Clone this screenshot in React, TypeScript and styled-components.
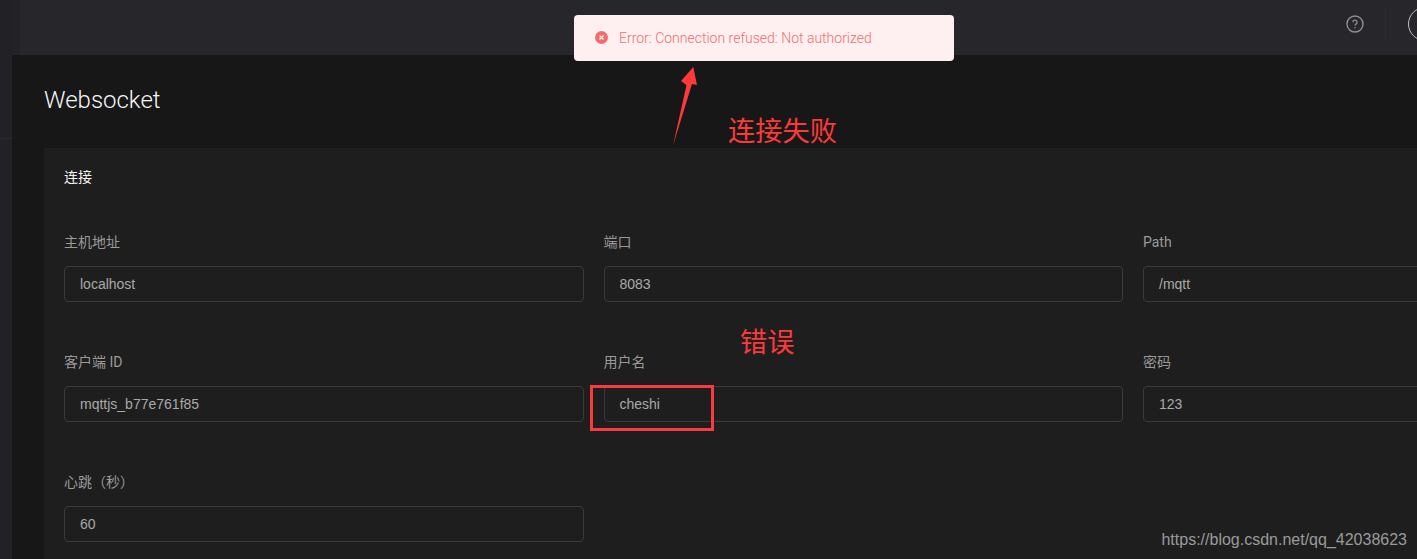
import React from 'react';
import styled, { createGlobalStyle } from 'styled-components';

const GlobalStyle = createGlobalStyle`
  html, body {
    margin: 0;
    padding: 0;
    width: 1417px;
    height: 559px;
    overflow: hidden;
    background: #171717;
  }
  * {
    box-sizing: border-box;
  }
`;

const fontStack = `Roboto, "Noto Sans CJK SC", sans-serif`;

const Page = styled.div`
  position: relative;
  display: flex;
  width: 1417px;
  height: 559px;
  overflow: hidden;
  font-family: ${fontStack};
`;

const Sidebar = styled.aside`
  flex: 0 0 12px;
  background: #222226;

  &::after {
    content: '';
    display: block;
    height: 1px;
    margin-top: 138px;
    background: #2a2a2e;
  }
`;

const Main = styled.div`
  flex: 1;
  min-width: 0;
  display: flex;
  flex-direction: column;
  background: #171717;
`;

const Header = styled.header`
  flex: 0 0 55px;
  display: flex;
  align-items: center;
  justify-content: flex-end;
  background: #26262b;
  border-left: 8px solid #232327;
  overflow: hidden;
`;

const HelpIcon = styled.svg`
  width: 18px;
  height: 18px;
  margin-right: 21px;
  margin-top: -7px;
  flex: none;
`;

const Divider = styled.div`
  width: 1px;
  height: 32px;
  margin-top: -7px;
  background: #2c2c31;
`;

const Avatar = styled.div`
  flex: none;
  width: 34px;
  height: 34px;
  margin-left: 22px;
  margin-top: -7px;
  margin-right: -25px;
  border: 1.5px solid #bdbdc0;
  border-radius: 50%;
`;

const Content = styled.main`
  flex: 1;
  padding: 0 0 0 32px;
  min-height: 0;
`;

const Title = styled.h1`
  margin: 0;
  padding-top: 30px;
  height: 93px;
  font-size: 24px;
  line-height: 30px;
  font-weight: 300;
  color: #f6f6f6;
`;

const Card = styled.section`
  width: 1500px;
  height: 420px;
  padding: 19px 20px 20px;
  background: #1f1e1f;
`;

const CardTitle = styled.h2`
  margin: 0;
  height: 55px;
  font-size: 14px;
  line-height: 20px;
  font-weight: 400;
  color: #f4f4f4;
`;

const FieldGrid = styled.div`
  display: grid;
  grid-template-columns: repeat(3, 519.5px);
  column-gap: 20px;
  row-gap: 40px;
`;

const Field = styled.div`
  display: flex;
  flex-direction: column;
`;

const Label = styled.label`
  height: 44px;
  padding-top: 10px;
  font-size: 14px;
  line-height: 20px;
  color: #9a9a9a;
`;

const Input = styled.div`
  height: 36px;
  padding: 0 15px;
  display: flex;
  align-items: center;
  border: 1px solid #3a3a3b;
  border-radius: 4px;
  font-family: "Liberation Sans", Arial, sans-serif;
  font-size: 14px;
  color: #a9a9a9;
`;

const Toast = styled.div`
  position: absolute;
  left: 574px;
  top: 15px;
  width: 380px;
  height: 46px;
  padding: 0 0 1px 21px;
  display: flex;
  align-items: center;
  gap: 11px;
  background: #fef0f0;
  border-radius: 4px;
  font-size: 14px;
  font-weight: 300;
  color: #f56c6c;
`;

const ToastIcon = styled.svg`
  width: 13px;
  height: 13px;
  flex: none;
`;

const Arrow = styled.svg`
  position: absolute;
  left: 670px;
  top: 66px;
  width: 30px;
  height: 82px;
`;

const Annotation = styled.div<{ $left: number; $top: number }>`
  position: absolute;
  left: ${p => p.$left}px;
  top: ${p => p.$top}px;
  font-family: "Noto Sans CJK SC", sans-serif;
  font-size: 27.250px;
  line-height: 34px;
  color: #fc3a3a;
  white-space: nowrap;
`;

const Highlight = styled.div`
  position: absolute;
  left: 590px;
  top: 385px;
  width: 124px;
  height: 46px;
  border: 3px solid #f93a3f;
`;

const Watermark = styled.div`
  position: absolute;
  right: 10px;
  top: 530px;
  font-family: "Liberation Sans", Arial, sans-serif;
  font-size: 16px;
  line-height: 20px;
  color: #9a9a9a;
`;

const fields = [
  { label: '主机地址', value: 'localhost' },
  { label: '端口', value: '8083' },
  { label: 'Path', value: '/mqtt' },
  { label: '客户端 ID', value: 'mqttjs_b77e761f85' },
  { label: '用户名', value: 'cheshi' },
  { label: '密码', value: '123' },
  { label: '心跳（秒）', value: '60' },
];

export default function App() {
  return (
    <Page>
      <GlobalStyle />
      <Sidebar />
      <Main>
        <Header>
          <HelpIcon viewBox="0 0 18 18" fill="none">
            <circle cx="9" cy="9" r="8" stroke="#8f8f92" strokeWidth="1.4" />
            <path d="M6.9 7.2a2.1 2.1 0 1 1 3.3 1.7c-.8.5-1.2.9-1.2 1.7" stroke="#8f8f92" strokeWidth="1.3" />
            <circle cx="9" cy="12.8" r=".8" fill="#8f8f92" />
          </HelpIcon>
          <Divider />
          <Avatar />
        </Header>
        <Content>
          <Title>Websocket</Title>
          <Card>
            <CardTitle>连接</CardTitle>
            <FieldGrid>
              {fields.map(field => (
                <Field key={field.label}>
                  <Label>{field.label}</Label>
                  <Input>{field.value}</Input>
                </Field>
              ))}
            </FieldGrid>
          </Card>
        </Content>
      </Main>

      <Toast>
        <ToastIcon viewBox="0 0 13 13">
          <circle cx="6.5" cy="6.5" r="6.5" fill="#f56c6c" />
          <path d="M4.5 4.5l4 4M8.5 4.5l-4 4" stroke="#fef0f0" strokeWidth="1.3" />
        </ToastIcon>
        Error: Connection refused: Not authorized
      </Toast>

      <Arrow viewBox="0 0 30 82">
        <path d="M3 79.500L16.500 19 11 15 23.300 1 27 19 22 18Z" fill="#fc3a3a" />
      </Arrow>
      <Annotation $left={728} $top={112}>连接失败</Annotation>
      <Annotation $left={740} $top={323}>错误</Annotation>
      <Highlight />
      <Watermark>https://blog.csdn.net/qq_42038623</Watermark>
    </Page>
  );
}
